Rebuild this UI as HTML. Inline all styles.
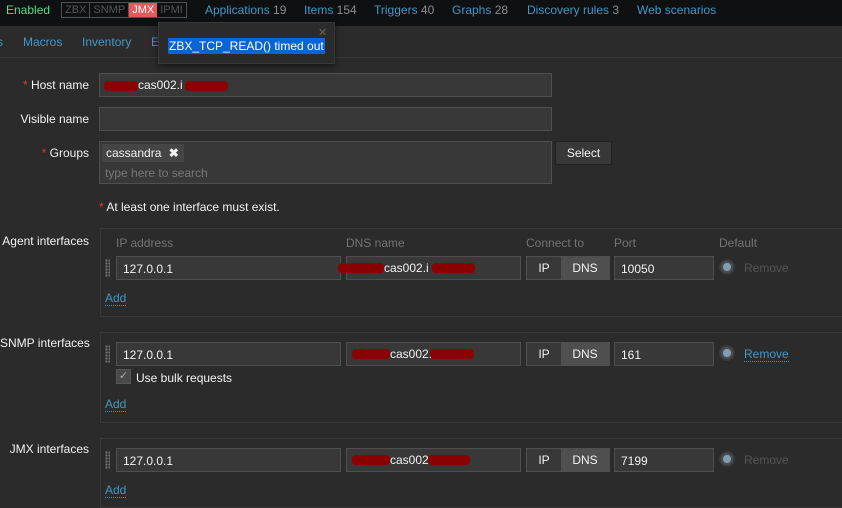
<!DOCTYPE html>
<html><head><meta charset="utf-8"><style>
*{box-sizing:border-box;margin:0;padding:0}
body{width:842px;height:496px;overflow:hidden;background:#2b2b2b;font-family:"Liberation Sans",Arial,sans-serif;font-size:12px;color:#f2f2f2;position:relative}
.a{position:absolute;white-space:nowrap}
.top{left:0;top:0;width:842px;height:26px;background:#0e1012}
.lnk{color:#4796c4}
.cnt{color:#8d8d8d}
.inp{position:absolute;background:#383838;border:1px solid #4f4f4f;height:24px;padding:5px 6px;color:#f2f2f2}
.lbl{text-align:right;width:89px;left:0}
.red{color:#e33734}
.box{position:absolute;left:100px;width:750px;border:1px solid #383838}
.hd{color:#737373}
.tog{position:absolute;height:24px;border:1px solid #4f4f4f;display:flex}
.tog span{display:block;text-align:center;line-height:22px}
.drag{position:absolute;width:5px;height:18px;background-image:radial-gradient(circle,#777 1px,transparent 1.2px);background-size:3px 3px}
.radio{position:absolute;width:16px;height:16px;border-radius:50%;background:#4f4f4f;border:2px solid #3a3a3a}
.radio:after{content:"";position:absolute;left:2px;top:2px;width:8px;height:8px;border-radius:50%;background:#7f9fb6}
.blot{position:absolute;background:#8b0000;height:10px;border-radius:4px}
.add{color:#4796c4;border-bottom:1px dotted #4796c4}
</style></head><body>
<div class="a top"></div>
<div class="a" style="left:6px;top:3px;color:#59db8f">Enabled</div>
<div class="a" style="left:61px;top:2px;height:16px;border:1px solid #4f4f4f;display:flex;font-size:11px;line-height:14px;color:#555">
<span style="padding:0 3px;border-right:1px solid #4f4f4f">ZBX</span><span style="padding:0 3px;border-right:1px solid #4f4f4f">SNMP</span><span style="padding:0 3px;background:#e45959;color:#fff">JMX</span><span style="padding:0 3px">IPMI</span></div>
<div class="a lnk" style="left:205px;top:3px">Applications <span class="cnt">19</span></div>
<div class="a lnk" style="left:304px;top:3px">Items <span class="cnt">154</span></div>
<div class="a lnk" style="left:374px;top:3px">Triggers <span class="cnt">40</span></div>
<div class="a lnk" style="left:452px;top:3px">Graphs <span class="cnt">28</span></div>
<div class="a lnk" style="left:527px;top:3px">Discovery rules <span class="cnt">3</span></div>
<div class="a lnk" style="left:637px;top:3px">Web scenarios</div>
<div class="a" style="left:0;top:57px;width:842px;height:1px;background:#383838"></div>
<div class="a lnk" style="left:-3px;top:35px">s</div>
<div class="a lnk" style="left:23px;top:35px">Macros</div>
<div class="a lnk" style="left:82px;top:35px">Inventory</div>
<div class="a lnk" style="left:151px;top:35px">E</div>
<div class="a" style="left:158px;top:22px;width:177px;height:42px;background:#2b2b2b;border:1px solid #383838;box-shadow:0 2px 6px rgba(0,0,0,.5)"></div>
<div class="a" style="left:318px;top:26px;color:#666;font-size:11px">✕</div>
<div class="a" style="left:168px;top:38px;background:#0a64d6;color:#fff;padding:1px 1px;line-height:14px">ZBX_TCP_READ() timed out</div>

<div class="a lbl" style="top:78px"><span class="red">* </span>Host name</div>
<div class="inp" style="left:99px;top:73px;width:453px"></div>
<div class="a" style="left:138px;top:78px">cas002.i</div>
<div class="blot" style="left:104px;top:81px;width:34px"></div>
<div class="blot" style="left:185px;top:81px;width:43px"></div>
<div class="a lbl" style="top:112px">Visible name</div>
<div class="inp" style="left:99px;top:107px;width:453px"></div>
<div class="a lbl" style="top:146px"><span class="red">* </span>Groups</div>
<div class="inp" style="left:99px;top:141px;width:453px;height:43px"></div>
<div class="a" style="left:102px;top:144px;width:82px;height:18px;background:#454545;padding:2px 4px">cassandra <b style="margin-left:4px">✖</b></div>
<div class="a" style="left:105px;top:166px;color:#777">type here to search</div>
<div class="a" style="left:555px;top:141px;width:57px;height:24px;background:#383838;border:1px solid #222;text-align:center;line-height:22px">Select</div>
<div class="a" style="left:99px;top:200px"><span class="red">* </span>At least one interface must exist.</div>

<div class="a lbl" style="top:234px;width:89px">Agent interfaces</div>
<div class="box" style="top:228px;height:89px"></div>
<div class="a hd" style="left:116px;top:236px">IP address</div>
<div class="a hd" style="left:346px;top:236px">DNS name</div>
<div class="a hd" style="left:526px;top:236px">Connect to</div>
<div class="a hd" style="left:614px;top:236px">Port</div>
<div class="a hd" style="left:719px;top:236px">Default</div>

<div class="drag" style="left:105px;top:259px"></div>
<div class="inp" style="left:116px;top:256px;width:225px">127.0.0.1</div>
<div class="inp" style="left:346px;top:256px;width:175px"></div>
<div class="a" style="left:384px;top:261px">cas002.i</div>
<div class="blot" style="left:338px;top:263px;width:46px"></div><div class="blot" style="left:432px;top:263px;width:43px"></div>
<div class="tog" style="left:526px;top:256px;width:84px"><span style="width:34px;background:#383838">IP</span><span style="flex:1;background:#4f4f4f">DNS</span></div>
<div class="inp" style="left:614px;top:256px;width:100px">10050</div>
<div class="radio" style="left:719px;top:259px"></div>
<div class="a" style="left:744px;top:261px;color:#555">Remove</div>
<div class="a add" style="left:105px;top:291px">Add</div>

<div class="a lbl" style="top:336px">SNMP interfaces</div>
<div class="box" style="top:332px;height:91px"></div>
<div class="drag" style="left:105px;top:345px"></div>
<div class="inp" style="left:116px;top:342px;width:225px">127.0.0.1</div>
<div class="inp" style="left:346px;top:342px;width:175px"></div>
<div class="a" style="left:390px;top:347px">cas002.</div>
<div class="blot" style="left:352px;top:349px;width:38px"></div><div class="blot" style="left:430px;top:349px;width:44px"></div>
<div class="tog" style="left:526px;top:342px;width:84px"><span style="width:34px;background:#383838">IP</span><span style="flex:1;background:#4f4f4f">DNS</span></div>
<div class="inp" style="left:614px;top:342px;width:100px">161</div>
<div class="radio" style="left:719px;top:345px"></div>
<div class="a add" style="left:744px;top:347px">Remove</div>
<div class="a" style="left:116px;top:369px;width:15px;height:15px;background:#4a4a4a;border:1px solid #555;color:#aaa;font-size:11px;text-align:center;line-height:13px">✓</div>
<div class="a" style="left:136px;top:371px">Use bulk requests</div>
<div class="a add" style="left:105px;top:397px">Add</div>

<div class="a lbl" style="top:442px">JMX interfaces</div>
<div class="box" style="top:438px;height:70px"></div>
<div class="drag" style="left:105px;top:451px"></div>
<div class="inp" style="left:116px;top:448px;width:225px">127.0.0.1</div>
<div class="inp" style="left:346px;top:448px;width:175px"></div>
<div class="a" style="left:390px;top:453px">cas002.</div>
<div class="blot" style="left:352px;top:455px;width:38px"></div><div class="blot" style="left:428px;top:455px;width:42px"></div>
<div class="tog" style="left:526px;top:448px;width:84px"><span style="width:34px;background:#383838">IP</span><span style="flex:1;background:#4f4f4f">DNS</span></div>
<div class="inp" style="left:614px;top:448px;width:100px">7199</div>
<div class="radio" style="left:719px;top:451px"></div>
<div class="a" style="left:744px;top:453px;color:#555">Remove</div>
<div class="a add" style="left:105px;top:483px">Add</div>
</body></html>
